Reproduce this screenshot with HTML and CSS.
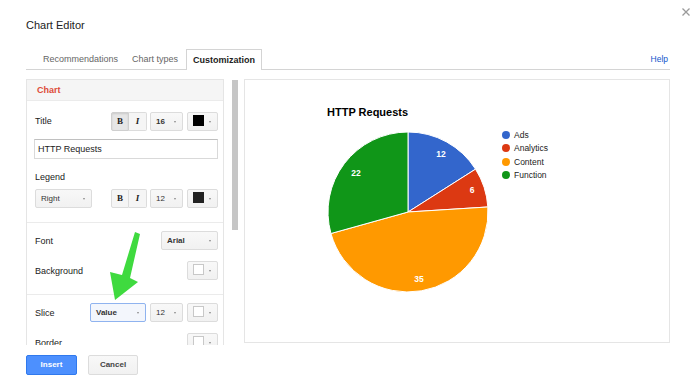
FILE: index.html
```html
<!DOCTYPE html>
<html>
<head>
<meta charset="utf-8">
<link rel="stylesheet" href="styles.css">
</head>
<body>
<div class="dialog">
  <div class="title">Chart Editor</div>
  <svg class="close" width="10" height="10" viewBox="0 0 10 10"><path d="M1.5 1.5 L8.5 8.5 M8.5 1.5 L1.5 8.5" stroke="#9a9a9a" stroke-width="1.3"/></svg>

  <div class="tabbar">
    <div class="tab">Recommendations</div>
    <div class="tab">Chart types</div>
    <div class="tab active">Customization</div>
    <div class="help">Help</div>
  </div>

  <div class="main">
    <div class="left">
      <div class="panel">
        <div class="section-head">Chart</div>
        <div class="section s1">
          <div class="row tall">
            <span class="label">Title</span>
            <div class="group">
              <div class="bi"><span class="b on">B</span><span class="i">I</span></div>
              <div class="select size"><span>16</span><i class="caret"></i></div>
              <div class="select color"><span class="swatch black"></span><i class="caret"></i></div>
            </div>
          </div>
          <div class="input">HTTP Requests</div>
          <div class="label block">Legend</div>
          <div class="row r2">
            <div class="select wide"><span class="reg">Right</span><i class="caret"></i></div>
            <div class="group">
              <div class="bi"><span class="b">B</span><span class="i">I</span></div>
              <div class="select size"><span class="reg">12</span><i class="caret"></i></div>
              <div class="select color"><span class="swatch dark"></span><i class="caret"></i></div>
            </div>
          </div>
        </div>
        <div class="section s2">
          <div class="row">
            <span class="label">Font</span>
            <div class="select wide"><span>Arial</span><i class="caret"></i></div>
          </div>
          <div class="row r2">
            <span class="label">Background</span>
            <div class="select color"><span class="swatch white"></span><i class="caret"></i></div>
          </div>
        </div>
        <div class="section s3">
          <div class="row">
            <span class="label">Slice</span>
            <div class="group">
              <div class="select wide focus"><span>Value</span><i class="caret"></i></div>
              <div class="select size"><span class="reg">12</span><i class="caret"></i></div>
              <div class="select color"><span class="swatch white"></span><i class="caret"></i></div>
            </div>
          </div>
          <div class="row r2">
            <span class="label">Border</span>
            <div class="select color"><span class="swatch white"></span><i class="caret"></i></div>
          </div>
        </div>
      </div>
    </div>
    <div class="scroll"><div class="thumb"></div></div>
    <div class="chart">
      <svg width="424" height="262" viewBox="0 0 424 262">
        <text x="82" y="36" class="ctitle">HTTP Requests</text>
        <g stroke="#fff" stroke-width="1">
          <path d="M163,132 L163,52 A80,80 0 0,1 230.54,89.14 Z" fill="#3366cc"/>
          <path d="M163,132 L230.54,89.14 A80,80 0 0,1 242.84,126.98 Z" fill="#dc3912"/>
          <path d="M163,132 L242.84,126.98 A80,80 0 0,1 85.95,153.51 Z" fill="#ff9900"/>
          <path d="M163,132 L85.95,153.51 A80,80 0 0,1 163,52 Z" fill="#109618"/>
        </g>
        <g class="vals">
          <text x="196" y="77">12</text>
          <text x="227" y="113">6</text>
          <text x="174" y="202">35</text>
          <text x="111" y="96">22</text>
        </g>
        <g class="legend">
          <circle cx="261" cy="55" r="4" fill="#3366cc"/>
          <circle cx="261" cy="68" r="4" fill="#dc3912"/>
          <circle cx="261" cy="82" r="4" fill="#ff9900"/>
          <circle cx="261" cy="95" r="4" fill="#109618"/>
          <text x="269" y="58">Ads</text>
          <text x="269" y="71">Analytics</text>
          <text x="269" y="85">Content</text>
          <text x="269" y="98">Function</text>
        </g>
      </svg>
    </div>
  </div>

  <div class="buttons">
    <div class="btn primary">Insert</div>
    <div class="btn">Cancel</div>
  </div>

  <svg class="arrow" width="40" height="76" viewBox="0 0 40 76">
    <polygon points="30,4 35,6 25,50 33,54 10,72 5,44 17,47" fill="#3fda3f"/>
  </svg>
</div>
</body>
</html>
```

FILE: styles.css
```css
html, body {
  margin: 0;
  padding: 0;
  background: #fff;
}
body {
  font-family: "Liberation Sans", Arial, sans-serif;
  color: #222;
  width: 696px;
  height: 390px;
  overflow: hidden;
}
.dialog {
  position: relative;
  padding: 18px 26px 0 26px;
}
.title {
  font-size: 11px;
  line-height: 14px;
  height: 14px;
  color: #222;
}
.close {
  position: absolute;
  left: 681px;
  top: 7px;
}
.tabbar {
  margin-top: 18px;
  display: flex;
  height: 19px;
  border-bottom: 1px solid #d4d4d4;
  padding-left: 10px;
  padding-right: 2px;
}
.tab {
  padding: 0 6px;
  height: 19px;
  line-height: 19px;
  border: 1px solid transparent;
  border-bottom: 0;
  font-size: 9px;
  color: #666;
  margin-top: -1px;
  margin-bottom: -1px;
  box-sizing: content-box;
}
.tab.active {
  border-color: #d4d4d4;
  background: #fff;
  color: #222;
  font-weight: bold;
  height: 20px;
  line-height: 20px;
  margin-left: 1px;
}
.help {
  margin-left: auto;
  font-size: 8.5px;
  line-height: 19px;
  color: #1155cc;
}
.main {
  display: flex;
  margin-top: 9px;
}
.left {
  width: 198px;
  height: 266px;
  overflow: hidden;
}
.panel {
  border: 1px solid #e5e5e5;
  height: 300px;
}
.section-head {
  height: 20px;
  line-height: 20px;
  background: #f5f5f5;
  border-bottom: 1px solid #ebebeb;
  color: #dd4b39;
  font-weight: bold;
  font-size: 9px;
  padding-left: 10px;
}
.section {
  padding: 10px 5px 14px 8px;
  border-bottom: 1px solid #ebebeb;
}
.section.s2, .section.s3 {
  padding-top: 8px;
}
.section.s3 {
  border-bottom: 0;
}
.row {
  display: flex;
  align-items: center;
  justify-content: space-between;
  height: 19px;
}
.row.tall {
  height: 20px;
}
.row.r2 {
  margin-top: 11px;
}
.s1 .row.r2 {
  margin-top: 6px;
}
.label {
  font-size: 9px;
  color: #222;
}
.label.block {
  display: block;
  margin-top: 12px;
  line-height: 12px;
}
.group {
  display: flex;
  align-items: center;
  gap: 4px;
}
.bi {
  display: flex;
  margin-right: -1px;
}
.bi span {
  width: 18px;
  height: 19px;
  box-sizing: border-box;
  border: 1px solid #dcdcdc;
  background: #f5f5f5;
  font-family: "Liberation Serif", "Times New Roman", serif;
  font-weight: bold;
  font-size: 9px;
  line-height: 17px;
  text-align: center;
  color: #222;
  border-radius: 2px 0 0 2px;
}
.bi span.i {
  font-style: italic;
  border-left: 0;
  border-radius: 0 2px 2px 0;
}
.bi span.on {
  background: #e6e6e6;
  border-color: #cfcfcf;
  box-shadow: inset 0 1px 2px rgba(0,0,0,0.12);
}
.select {
  position: relative;
  height: 19px;
  box-sizing: border-box;
  border: 1px solid #dcdcdc;
  border-radius: 2px;
  background: linear-gradient(#f8f8f8, #f1f1f1);
  font-size: 8px;
  font-weight: bold;
  line-height: 17px;
  color: #333;
  padding-left: 5px;
}
.select .reg {
  font-weight: normal;
}
.select.size {
  width: 33px;
}
.select.color {
  width: 31px;
  padding-left: 5px;
}
.select.wide {
  width: 57px;
}
.select.focus {
  width: 56px;
  border-color: #8fb3ef;
  background: #f3f6fc;
}
.caret {
  position: absolute;
  right: 6px;
  top: 8px;
  width: 0;
  height: 0;
  border-left: 1.5px solid transparent;
  border-right: 1.5px solid transparent;
  border-top: 2px solid #888;
}
.swatch {
  display: inline-block;
  width: 11px;
  height: 11px;
  box-sizing: border-box;
  vertical-align: middle;
  margin-top: -2px;
}
.swatch.black {
  background: #000;
}
.swatch.dark {
  background: #222;
}
.swatch.white {
  background: #fff;
  border: 1px solid #c8c8c8;
}
.input {
  margin-top: 8px;
  height: 20px;
  box-sizing: border-box;
  border: 1px solid #d9d9d9;
  border-top-color: #c0c0c0;
  font-size: 9px;
  line-height: 18px;
  padding-left: 3px;
  margin-left: -1px;
  color: #222;
}
.scroll {
  width: 6px;
  margin-left: 8px;
  height: 266px;
}
.thumb {
  margin-top: 1px;
  height: 150px;
  background: #c6c6c6;
}
.chart {
  margin-left: 6px;
  width: 424px;
  height: 262px;
  border: 1px solid #e5e5e5;
}
.chart svg {
  display: block;
}
.ctitle {
  font-family: "Liberation Sans", Arial, sans-serif;
  font-weight: bold;
  font-size: 11px;
  fill: #000;
}
.vals text {
  font-family: "Liberation Sans", Arial, sans-serif;
  font-size: 8.5px;
  font-weight: bold;
  fill: #fff;
  text-anchor: middle;
}
.legend text {
  font-family: "Liberation Sans", Arial, sans-serif;
  font-size: 8.5px;
  fill: #222;
}
.buttons {
  display: flex;
  gap: 11px;
  margin-top: 10px;
}
.btn {
  height: 20px;
  width: 50px;
  box-sizing: border-box;
  border: 1px solid #dcdcdc;
  border-radius: 2px;
  background: linear-gradient(#f8f8f8, #f1f1f1);
  font-size: 8px;
  font-weight: bold;
  line-height: 18px;
  text-align: center;
  color: #444;
}
.btn.primary {
  width: 51px;
  background: #4d90fe;
  border-color: #3079ed;
  color: #fff;
}
.arrow {
  position: absolute;
  left: 105px;
  top: 228px;
}
```
